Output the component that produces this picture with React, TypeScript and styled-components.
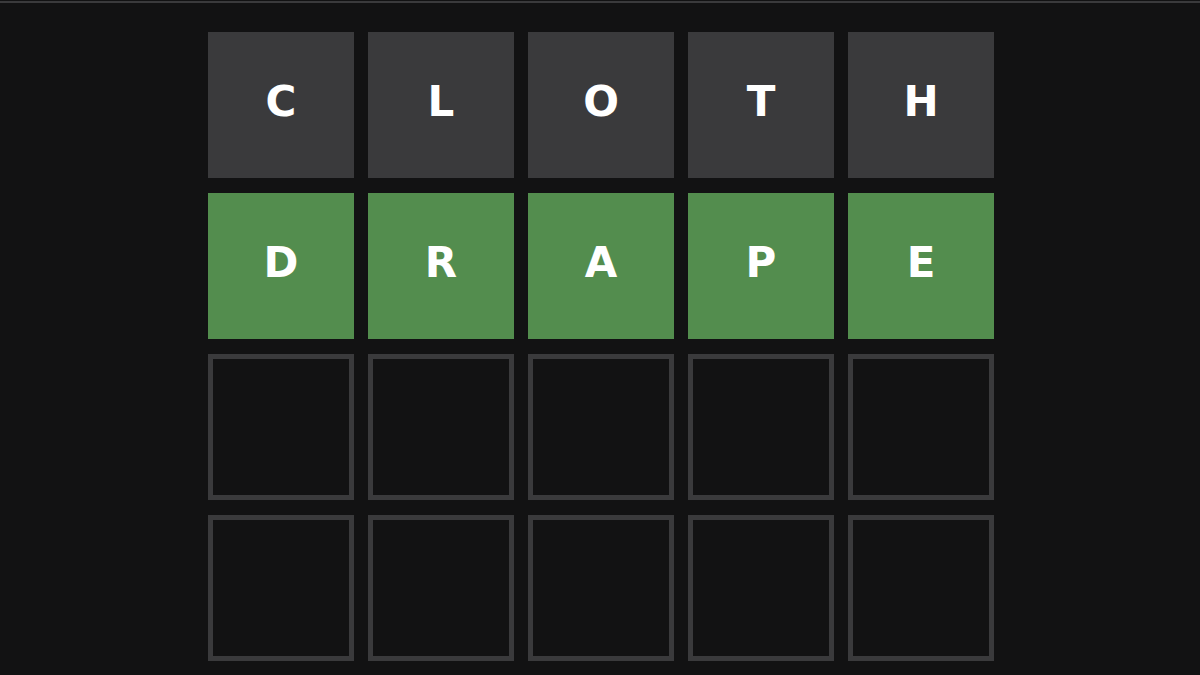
import * as React from "react";
import styled, { createGlobalStyle } from "styled-components";

type TileState = "absent" | "correct" | "empty";

interface TileProps {
  $state: TileState;
}

const GlobalStyle = createGlobalStyle`
  html, body {
    margin: 0;
    padding: 0;
    background: #121213;
    height: 100%;
    overflow: hidden;
  }
`;

const Page = styled.div`
  width: 1200px;
  height: 675px;
  background: #121213;
  font-family: "DejaVu Sans", "Liberation Sans", sans-serif;
`;

const TopRule = styled.div`
  height: 1px;
  border-bottom: 2px solid #3a3a3c;
`;

const Board = styled.div`
  display: grid;
  grid-template-columns: repeat(5, 146px);
  grid-auto-rows: 146px;
  column-gap: 14px;
  row-gap: 15px;
  justify-content: center;
  padding: 29px 0 0 2px;
`;

const tileBg: Record<TileState, string> = {
  absent: "#3a3a3c",
  correct: "#538d4e",
  empty: "#121213",
};

const Tile = styled.div<TileProps>`
  box-sizing: border-box;
  display: flex;
  align-items: center;
  justify-content: center;
  padding-bottom: 8px;
  background: ${(p) => tileBg[p.$state]};
  border: ${(p) => (p.$state === "empty" ? "5px solid #3a3a3c" : "none")};
  color: #ffffff;
  font-size: 42px;
  font-weight: 700;
  text-transform: uppercase;
`;

const rows: { word: string; state: TileState }[] = [
  { word: "cloth", state: "absent" },
  { word: "drape", state: "correct" },
  { word: "     ", state: "empty" },
  { word: "     ", state: "empty" },
];

const App: React.FC = () => {
  return (
    <Page>
      <GlobalStyle />
      <TopRule />
      <Board>
        {rows.map((row, r) =>
          row.word.split("").map((ch, i) => (
            <Tile key={`${r}-${i}`} $state={row.state}>
              {ch.trim()}
            </Tile>
          ))
        )}
      </Board>
    </Page>
  );
};

export default App;
